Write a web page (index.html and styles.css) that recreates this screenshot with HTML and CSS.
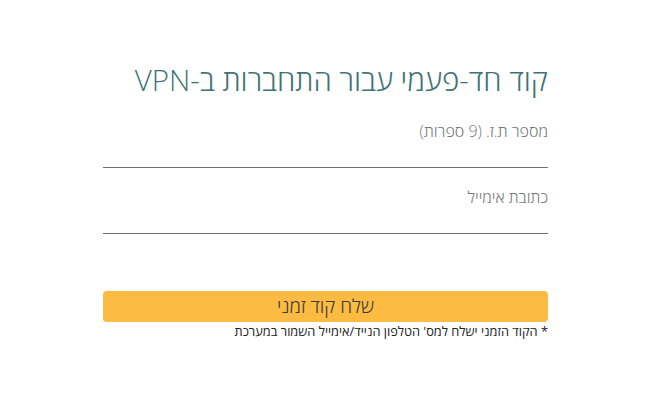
FILE: index.html
```html
<!DOCTYPE html>
<html lang="he" dir="rtl">
<head>
<meta charset="utf-8">
<link rel="stylesheet" href="styles.css">
</head>
<body>
<div class="page">
  <form class="form">
    <h1 class="title">קוד חד-פעמי עבור התחברות ב-VPN</h1>
    <div class="field">
      <label class="label">מספר ת.ז. (9 ספרות)</label>
      <div class="line"></div>
    </div>
    <div class="field">
      <label class="label">כתובת אימייל</label>
      <div class="line"></div>
    </div>
    <button type="button" class="btn">שלח קוד זמני</button>
    <p class="note">* הקוד הזמני ישלח למס' הטלפון הנייד/אימייל השמור במערכת</p>
  </form>
</div>
</body>
</html>
```
FILE: styles.css
```css
html, body {
  margin: 0;
  padding: 0;
  background: #fff;
}
body {
  font-family: "Open Sans", "Noto Sans", sans-serif;
}
.page {
  display: flex;
  justify-content: flex-start;
  padding: 0 120px 0 103px;
}
.form {
  width: 445px;
  display: flex;
  flex-direction: column;
}
.title {
  margin: 60px 0 0 0;
  font-weight: 300;
  font-size: 29.5px;
  line-height: 40px;
  color: #3f7474;
}
.field {
  display: flex;
  flex-direction: column;
}
.label {
  font-weight: 300;
  font-size: 16px;
  line-height: 20px;
  color: #7a7a7a;
  margin-top: 21px;
}
.field + .field .label {
  margin-top: 19px;
}
.line {
  height: 1px;
  background: #6f6f6f;
  margin-top: 26px;
}
.btn {
  margin-top: 57px;
  height: 31px;
  border: none;
  border-radius: 4px;
  background: #fdbb42;
  color: #3a3a3a;
  font-family: "Open Sans", "Noto Sans", sans-serif;
  font-size: 19px;
  font-weight: 300;
  padding: 0;
  line-height: 31px;
}
.note {
  margin: 1px 0 0 0;
  font-size: 12.8px;
  line-height: 17px;
  color: #222;
}
```
